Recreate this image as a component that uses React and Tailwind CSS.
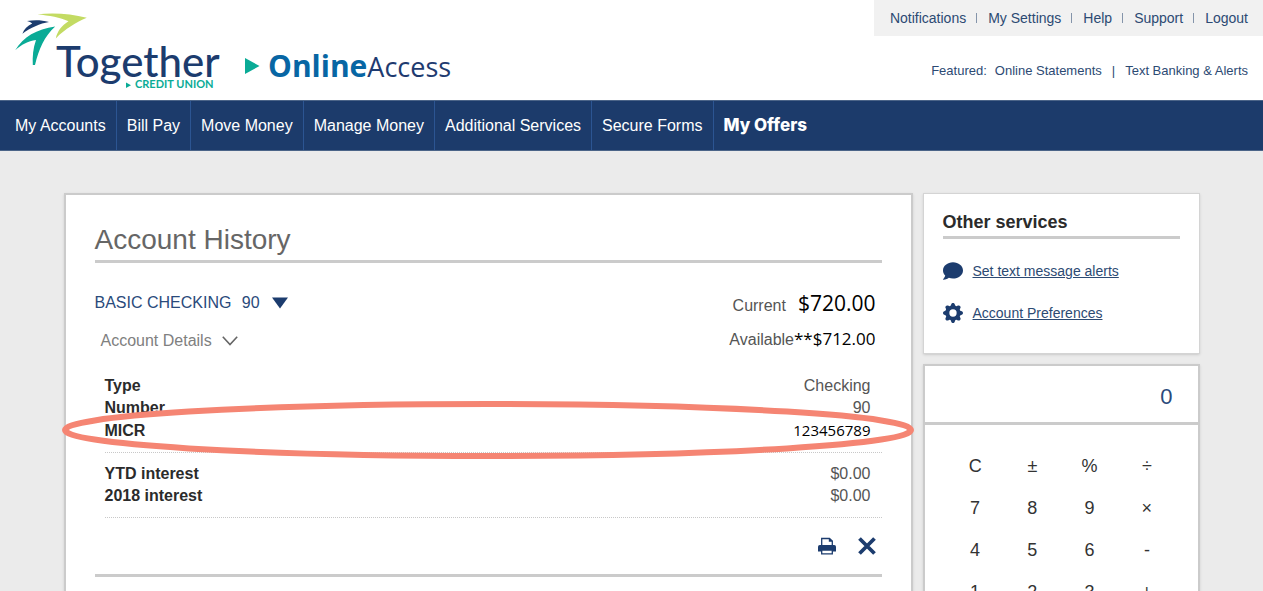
import React from "react";
import { FaComment } from "react-icons/fa";
import { BsGearFill } from "react-icons/bs";

const utilityLinks = ["Notifications", "My Settings", "Help", "Support", "Logout"];

const navItems = [
  "My Accounts",
  "Bill Pay",
  "Move Money",
  "Manage Money",
  "Additional Services",
  "Secure Forms",
];

const calcKeys = [
  "C", "±", "%", "÷",
  "7", "8", "9", "×",
  "4", "5", "6", "-",
  "1", "2", "3", "+",
];

const Logo = () => (
  <svg viewBox="0 0 240 100" className="w-60 h-[100px] shrink-0" role="img" aria-label="Together Credit Union">
    <path
      d="M37.5 14.2C54 12.6 71 13.6 86.8 17.8C76 22.6 65.5 28.6 55.8 38.4C57.2 31.6 61.6 25.6 68.5 21.3C60.6 17.4 49 15.6 37.5 14.2Z"
      fill="#c3db63"
    />
    <path
      d="M27 21C34.5 19.6 41.5 19.9 49 21.9C40 23.4 30.6 27.6 22.4 33.7C24 29.4 27.4 26 32.2 23.6C31 22.4 29.2 21.6 27 21Z"
      fill="#1c3c6e"
    />
    <path
      d="M15.2 50.2C23.4 37 36.4 29.3 55.2 26.6C44.4 36.4 38.8 49.4 35 65L32.8 65C32.4 56.4 33 48.4 36 40C28 41 21.4 44.8 15.2 50.2Z"
      fill="#0aab96"
    />
    <text x="56" y="77" fill="#1c3c6e" className="font-[Lato,sans-serif] text-[42px] font-medium">
      Together
    </text>
    <path d="M126 82.5L131 85.3L126 88Z" fill="#0aab96" />
    <text x="135" y="88" fill="#0aab96" className="font-[Lato,sans-serif] text-[11px] font-bold">
      CREDIT UNION
    </text>
  </svg>
);

const Header = () => (
  <header className="flex justify-between bg-white">
    <div className="flex">
      <a href="#home">
        <Logo />
      </a>
      <div className="flex items-center gap-2 pl-1 pt-8 font-['Open_Sans',sans-serif]">
        <svg viewBox="0 0 16 18" className="w-4 h-[18px]" aria-hidden="true">
          <path d="M1 1L15.5 9L1 17Z" fill="#0aab96" />
        </svg>
        <p className="whitespace-nowrap pt-1 leading-9">
          <span className="text-[30px] font-bold text-[#0766a4]">Online</span>
          <span className="text-[27px] text-[#1f3b70]">Access</span>
        </p>
      </div>
    </div>

    <div className="flex flex-col items-end text-[#2c4a73]">
      <ul className="flex h-9 items-center bg-[#f1f1f1] pl-4 pr-[15px] text-sm">
        {utilityLinks.map((link, i) => (
          <li key={link} className="flex items-center">
            {i > 0 && <span className="ml-2.5 mr-[11px] h-2.5 w-px bg-[#8494aa]" />}
            <a href="#utility" className="hover:underline">{link}</a>
          </li>
        ))}
      </ul>
      <p className="flex pr-[15px] pt-6 text-[13px] leading-[22px]">
        <span className="mr-2">Featured:</span>
        <a href="#statements" className="hover:underline">Online Statements</a>
        <span className="mx-2.5">|</span>
        <a href="#alerts" className="hover:underline">Text Banking &amp; Alerts</a>
      </p>
    </div>
  </header>
);

const NavBar = () => (
  <nav className="border-y border-[#4b6488] bg-[#1c3b6b] text-base text-white">
    <ul className="flex pl-[5px] leading-[49px]">
      {navItems.map((item) => (
        <li key={item} className="border-r border-[#2c5592]">
          <a href="#nav" className="block px-2.5">{item}</a>
        </li>
      ))}
      <li>
        <a href="#offers" className="block px-2.5 font-[Inter,sans-serif] text-[17px] font-extrabold">
          My Offers
        </a>
      </li>
    </ul>
  </nav>
);

const PrintIcon = () => (
  <svg viewBox="0 0 18 18" className="w-[18px] h-[18px]" aria-hidden="true">
    <path d="M3.7 9V1.5H11.5L14.3 4V9" fill="none" stroke="#1c3c6e" strokeWidth="1.3" />
    <path d="M10.8 1V4.8H14.8Z" fill="#1c3c6e" />
    <path
      d="M1.8 8H16.2Q18 8 18 9.8V14.5H0V9.8Q0 8 1.8 8Z"
      fill="#1c3c6e"
    />
    <path d="M3.7 13V16.8H14.3V13Z" fill="#fff" stroke="#1c3c6e" strokeWidth="1.3" />
  </svg>
);

const DetailRow = ({ label, children }) => (
  <tr>
    <th scope="row" className="p-0 text-left font-bold text-[#2b2b2b]">{label}</th>
    <td className="p-0 pr-[11px] text-right">{children}</td>
  </tr>
);

const AccountHistory = () => (
  <main className="min-w-0 flex-1 border-2 border-[#cbcbcb] bg-white px-[29px] pb-10 pt-[26px] shadow">
    <h1 className="border-b-[3px] border-[#cbcbcb] pb-px text-[28px] leading-[38px] text-[#666]">
      Account History
    </h1>

    <div className="flex items-start justify-between pt-[22px]">
      <div>
        <button type="button" className="flex h-9 items-center gap-3 text-base text-[#2a4a7b]">
          <span>
            BASIC CHECKING <span className="ml-1.5">90</span>
          </span>
          <svg viewBox="0 0 16 12" className="w-4 h-3" aria-hidden="true">
            <path d="M0 0.5H16L8 11.5Z" fill="#1c3c6e" />
          </svg>
        </button>
        <button type="button" className="flex h-10 items-center gap-2.5 pl-1.5 text-base text-[#808080]">
          Account Details
          <svg viewBox="0 0 16 10" className="w-4 h-2.5" aria-hidden="true">
            <path d="M0.8 0.8L8 8.6L15.2 0.8" fill="none" stroke="#666" strokeWidth="1.6" />
          </svg>
        </button>
      </div>
      <div className="pr-1.5 text-right text-[#555]">
        <p className="h-9 leading-9">
          Current
          <span className="ml-3 font-['Open_Sans',sans-serif] text-[21px] text-black">$720.00</span>
        </p>
        <p className="h-9 leading-9">
          Available
          <span className="font-['Open_Sans',sans-serif] text-[17px] text-black">**$712.00</span>
        </p>
      </div>
    </div>

    <div className="relative ml-2.5 mt-3.5 text-base leading-[22px] text-[#555]">
      <table className="w-full border-collapse">
        <tbody>
          <DetailRow label="Type">Checking</DetailRow>
          <DetailRow label="Number">90</DetailRow>
          <DetailRow label="MICR">
            <span className="font-['Open_Sans',sans-serif] text-[15px] text-black">123456789</span>
          </DetailRow>
        </tbody>
      </table>
      <table className="mt-2.5 w-full border-separate border-spacing-0 border-y border-dotted border-[#c8c8c8] py-2.5">
        <tbody>
          <DetailRow label="YTD interest">$0.00</DetailRow>
          <DetailRow label="2018 interest">$0.00</DetailRow>
        </tbody>
      </table>

      {/* Highlight around the MICR row */}
      <svg
        viewBox="0 0 852 58"
        preserveAspectRatio="none"
        className="pointer-events-none absolute -left-11 top-[26px] h-[58px] w-[calc(100%+77px)]"
        aria-hidden="true"
      >
        <ellipse cx="426" cy="29" rx="422" ry="26" fill="none" stroke="#f58573" strokeWidth="6" />
      </svg>
    </div>

    <div className="flex h-[59px] items-center justify-end gap-[22px] border-b-[3px] border-[#cbcbcb] pr-1.5">
      <button type="button" aria-label="Print">
        <PrintIcon />
      </button>
      <button type="button" aria-label="Close">
        <svg viewBox="0 0 18 18" className="w-[18px] h-[18px]" aria-hidden="true">
          <path d="M1.5 1.5L16.5 16.5M16.5 1.5L1.5 16.5" stroke="#1c3c6e" strokeWidth="3.8" />
        </svg>
      </button>
    </div>
  </main>
);

const OtherServices = () => (
  <section className="border border-[#d4d4d4] bg-white px-[19px] pb-[30px] pt-4 shadow">
    <h2 className="border-b-[3px] border-[#cbcbcb] pb-0.5 text-lg leading-6 font-bold text-[#2b2b2b]">
      Other services
    </h2>
    <ul className="space-y-[22px] pt-[22px] text-sm text-[#2c4a73]">
      <li className="flex items-center gap-2.5">
        <FaComment size={20} className="text-[#1c3c6e]" />
        <a href="#text-alerts" className="underline">Set text message alerts</a>
      </li>
      <li className="flex items-center gap-2.5">
        <BsGearFill size={20} className="text-[#1c3c6e]" />
        <a href="#preferences" className="underline">Account Preferences</a>
      </li>
    </ul>
  </section>
);

const Calculator = () => (
  <section className="border-2 border-[#cbcbcb] bg-white shadow">
    <output className="block border-b-[3px] border-[#cbcbcb] pr-[25px] pt-1.5 text-right text-[22px] leading-[50px] text-[#2a4a7b]">
      0
    </output>
    <div className="grid grid-cols-4 px-[22px] pb-5 pt-5">
      {calcKeys.map((key) => (
        <button key={key} type="button" className="h-[42px] text-lg text-[#333]">
          {key}
        </button>
      ))}
    </div>
  </section>
);

const App = () => {
  return (
    <div className="min-h-screen bg-[#ebebeb] font-['Liberation_Sans',Arial,sans-serif]">
      <Header />
      <NavBar />
      <div className="mx-auto flex max-w-[1136px] items-start gap-2.5 pt-[42px]">
        <AccountHistory />
        <aside className="w-[277px] shrink-0 space-y-2.5">
          <OtherServices />
          <Calculator />
        </aside>
      </div>
    </div>
  );
};

export default App;
